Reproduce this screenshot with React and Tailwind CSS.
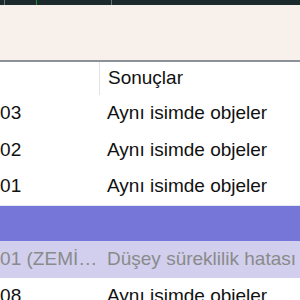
import React from 'react';

const rows = [
  { name: 'Kolon S103', result: 'Aynı isimde objeler', kind: 'normal' },
  { name: 'Kolon S102', result: 'Aynı isimde objeler', kind: 'normal' },
  { name: 'Kolon S101', result: 'Aynı isimde objeler', kind: 'normal' },
  { name: '', result: '', kind: 'selected' },
  { name: 'Kolon S101 (ZEMİN KAT)', result: 'Düşey süreklilik hatası', kind: 'disabled' },
  { name: 'Kolon S108', result: 'Aynı isimde objeler', kind: 'normal' },
];

const rowStyles = {
  normal: 'bg-white text-[#111111]',
  selected: 'bg-[#7676d9] text-white border-t border-[#e6e6f0]',
  disabled: 'bg-[#d1cfed] text-[#8a8a8a]',
};

const App = () => {
  return (
    <div
      className="w-[300px] h-[300px] overflow-hidden bg-white"
      style={{ fontFamily: '"Liberation Sans", Arial, sans-serif' }}
    >
      {/* chart strip */}
      <div className="h-[5px] bg-[#1d2a2d]">
        <svg width="300" height="5" className="block">
          <rect x="4" y="0" width="1" height="5" fill="#6b7073" />
          <rect x="36" y="0" width="1" height="5" fill="#1f8f2c" />
          <rect x="111" y="0" width="1" height="5" fill="#6b7073" />
        </svg>
      </div>

      <div className="h-[55px] bg-[#f8f0ea]" />
      <div className="h-[2px] bg-[#8d9199]" />

      {/* header */}
      <div className="flex h-[33px] text-[19px] text-[#111111]">
        <div className="w-[100px] border-r border-[#e3e3e3]" />
        <div className="flex items-center pl-[8px]">Sonuçlar</div>
      </div>

      {/* rows */}
      <div className="flex flex-col">
        {rows.map((row, i) => (
          <div
            key={i}
            className={`flex h-[36.5px] items-center text-[19px] ${rowStyles[row.kind]}`}
          >
            <div className="w-[100px] shrink-0 overflow-hidden">
              <div className="ml-[-77px] w-[177px] pr-[2px] whitespace-nowrap overflow-hidden text-ellipsis">
                {row.name}
              </div>
            </div>
            <div className="pl-[7px] whitespace-nowrap">{row.result}</div>
          </div>
        ))}
      </div>
    </div>
  );
};

export default App;
